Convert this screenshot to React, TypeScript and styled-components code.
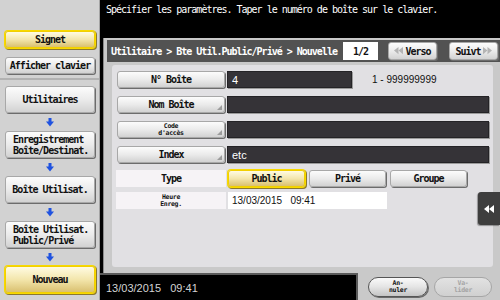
import React from 'react';
import styled, { createGlobalStyle, css } from 'styled-components';

const MONO = `"DejaVu Sans Mono", "Liberation Mono", monospace`;
const SANS = `"Liberation Sans", Arial, sans-serif`;

const GlobalStyle = createGlobalStyle`
  html, body {
    margin: 0;
    padding: 0;
    background: #000;
  }
  body {
    width: 500px;
    height: 300px;
    overflow: hidden;
  }
  * {
    box-sizing: border-box;
  }
`;

const raised = css`
  background: linear-gradient(#fcfcfc, #ebebeb 50%, #d2d2d2);
  border: 1px solid #a8a8a8;
  border-radius: 3px;
  box-shadow: 1px 1px 0 #6c6c6c;
`;

const lit = css`
  background: linear-gradient(#fffbe2, #f3e6ac 50%, #d9c070);
  border: 1px solid #f2cf00;
  border-radius: 3px;
  box-shadow: 0 0 0 1px #f7d900, 1px 1px 0 1px #8a7830;
`;

const Screen = styled.div`
  position: relative;
  display: flex;
  width: 500px;
  height: 300px;
  font-family: ${MONO};
  font-size: 10px;
  letter-spacing: -1px;
  color: #111;
`;

const Sidebar = styled.div`
  width: 100px;
  min-width: 0;
  flex: 0 0 100px;
  overflow: hidden;
  display: flex;
  flex-direction: column;
  background: #d2d2d2;
  border-right: 1px solid #a4a4a4;
`;

const ShortcutBlock = styled.div`
  height: 80px;
  display: flex;
  flex-direction: column;
  gap: 9px;
  padding: 31px 4px 0 5px;
  border-bottom: 2px solid #b2b2b2;
`;

const NavBlock = styled.div`
  display: flex;
  flex-direction: column;
  padding: 6px 4px 0 5px;
`;

const SideButton = styled.div<{ $active?: boolean; $tall?: boolean; $left?: boolean }>`
  ${(p) => (p.$active ? lit : raised)}
  width: 90px;
  height: ${(p) => (p.$tall ? 27 : 17)}px;
  display: flex;
  flex-direction: column;
  justify-content: center;
  align-items: ${(p) => (p.$left ? 'flex-start' : 'center')};
  padding: 0 0 0 ${(p) => (p.$left ? 7 : 0)}px;
  font-weight: bold;
  line-height: 11px;
  white-space: nowrap;
`;

const ArrowSlot = styled.div`
  height: 18px;
  display: flex;
  align-items: center;
  justify-content: center;
`;

const Main = styled.div`
  flex: 1;
  min-width: 0;
  display: flex;
  flex-direction: column;
  background: #000;
`;

const Message = styled.div`
  height: 38px;
  padding: 4px 0 0 6px;
  line-height: 12px;
  color: #fff;
  white-space: nowrap;
`;

const Panel = styled.div`
  flex: 1;
  display: flex;
  flex-direction: column;
  margin-left: 3px;
  padding: 2px 0 6px 3px;
  background: #c9c9c9;
  border-left: 1px solid #8a8a8a;
`;

const Header = styled.div`
  height: 22px;
  display: flex;
  align-items: center;
  padding: 0 2px 0 4px;
  background: #525252;
`;

const Crumbs = styled.div`
  flex: 1;
  color: #fff;
  font-weight: bold;
  white-space: nowrap;
`;

const PageBox = styled.div`
  width: 35px;
  height: 18px;
  display: flex;
  align-items: center;
  justify-content: center;
  background: #fff;
  font-weight: bold;
  margin-right: 10px;
`;

const PagerButton = styled.div<{ $gapAfter?: number }>`
  ${raised}
  width: 49px;
  height: 18px;
  display: flex;
  align-items: center;
  justify-content: center;
  gap: 2px;
  font-weight: bold;
  margin-right: ${(p) => p.$gapAfter ?? 0}px;
`;

const InnerBox = styled.div`
  flex: 1;
  margin: 3px 7px 0 5px;
  padding: 6px 4px 0 4px;
  background: #e1e0e3;
  border-radius: 3px;
  display: flex;
  flex-direction: column;
`;

const FieldGroup = styled.div<{ $gap: number; $top?: number }>`
  display: flex;
  flex-direction: column;
  gap: ${(p) => p.$gap}px;
  margin-top: ${(p) => p.$top ?? 0}px;
`;

const Row = styled.div`
  display: flex;
  align-items: center;
  gap: 2px;
  height: 17px;
`;

const LabelButton = styled.div<{ $keyed?: boolean }>`
  ${raised}
  position: relative;
  width: 108px;
  height: 17px;
  margin-left: 1px;
  display: flex;
  flex-direction: column;
  align-items: center;
  justify-content: center;
  font-weight: bold;
  ${(p) =>
    p.$keyed &&
    css`
      &::after {
        content: '';
        position: absolute;
        right: 2px;
        bottom: 2px;
        border-left: 5px solid transparent;
        border-bottom: 5px solid #9c9c9c;
      }
    `}
`;

const PlainLabel = styled.div`
  width: 110px;
  height: 17px;
  display: flex;
  flex-direction: column;
  align-items: center;
  justify-content: center;
  background: #f6f3f6;
  font-weight: bold;
`;

const TinyText = styled.span`
  display: block;
  font-size: 6.5px;
  line-height: 7px;
  height: 7px;
  letter-spacing: -0.3px;
  font-weight: bold;
`;

const DarkField = styled.div<{ $width?: number }>`
  ${(p) => (p.$width ? `width: ${p.$width}px;` : 'flex: 1;')}
  height: 17px;
  display: flex;
  align-items: center;
  padding-left: 4px;
  background: #353337;
  border: 1px solid #242326;
  box-shadow: 1px 1px 0 #9a9a9a;
  color: #fff;
  font-family: ${SANS};
  font-size: 11px;
  letter-spacing: 0;
`;

const Range = styled.span`
  margin-left: 18px;
  font-family: ${SANS};
  font-size: 10px;
  letter-spacing: 0;
`;

const Choices = styled.div`
  display: flex;
  gap: 4px;
`;

const Choice = styled.div<{ $on?: boolean }>`
  ${(p) => (p.$on ? lit : raised)}
  width: 77px;
  height: 17px;
  display: flex;
  align-items: center;
  justify-content: center;
  font-weight: bold;
`;

const WhiteField = styled.div`
  width: 159px;
  height: 17px;
  display: flex;
  align-items: center;
  padding-left: 4px;
  background: #fff;
  font-family: ${SANS};
  font-size: 10px;
  letter-spacing: 0;
  white-space: pre;
`;

const Footer = styled.div`
  height: 27px;
  display: flex;
`;

const DateBar = styled.div`
  width: 258px;
  display: flex;
  align-items: center;
  padding: 0 0 0 6px;
  background: #000;
  border-top: 2px solid #5a5a5a;
  border-right: 2px solid #5a5a5a;
  color: #d4d4d4;
  font-family: ${SANS};
  font-size: 11px;
  letter-spacing: 0;
  white-space: pre;
`;

const ActionBar = styled.div`
  flex: 1;
  display: flex;
  align-items: center;
  gap: 6px;
  padding: 0 8px 0 10px;
  background: #c9c9c9;
`;

const PillButton = styled.div<{ $disabled?: boolean; $width: number }>`
  width: ${(p) => p.$width}px;
  height: 20px;
  display: flex;
  flex-direction: column;
  align-items: center;
  justify-content: center;
  border-radius: 10px;
  ${(p) =>
    p.$disabled
      ? css`
          background: linear-gradient(#e2e2e2, #d0d0d0);
          border: 1px solid #a6a6a6;
          color: #a4a4a4;
        `
      : css`
          background: linear-gradient(#fafafa, #e4e4e4 50%, #c4c4c4);
          border: 1px solid #555;
          box-shadow: 1px 1px 0 #6a6a6a;
          color: #111;
        `}
`;

const SideTab = styled.div`
  position: absolute;
  right: 0;
  top: 192px;
  width: 22px;
  height: 33px;
  display: flex;
  align-items: center;
  justify-content: center;
  background: #3e3e3e;
  border-radius: 3px 0 0 3px;
  box-shadow: -1px 1px 1px rgba(0, 0, 0, 0.35);
`;

const DownArrow: React.FC = () => (
  <svg width="8" height="9" viewBox="0 0 8 9">
    <rect x="2.5" y="0" width="3" height="4" fill="#1f52e0" />
    <polygon points="0,3.5 8,3.5 4,8.5" fill="#1f52e0" />
  </svg>
);

const DoubleTriangle: React.FC<{ dir: 'left' | 'right'; color: string; size?: number }> = ({
  dir,
  color,
  size = 9,
}) => (
  <svg
    width={size}
    height={size * 0.8}
    viewBox="0 0 10 8"
    style={dir === 'right' ? { transform: 'scaleX(-1)' } : undefined}
  >
    <polygon points="0,4 5,0 5,8" fill={color} />
    <polygon points="5,4 10,0 10,8" fill={color} />
  </svg>
);

const navItems: { label: string[]; active?: boolean }[] = [
  { label: ['Utilitaires'] },
  { label: ['Enregistrement', 'Boîte/Destinat.'] },
  { label: ['Boîte Utilisat.'] },
  { label: ['Boîte Utilisat.', 'Public/Privé'] },
  { label: ['Nouveau'], active: true },
];

export default function App() {
  return (
    <>
      <GlobalStyle />
      <Screen>
        <Sidebar>
          <ShortcutBlock>
            <SideButton $active>Signet</SideButton>
            <SideButton>Afficher clavier</SideButton>
          </ShortcutBlock>
          <NavBlock>
            {navItems.map((item, i) => (
              <React.Fragment key={i}>
                {i > 0 && (
                  <ArrowSlot>
                    <DownArrow />
                  </ArrowSlot>
                )}
                <SideButton $tall $active={item.active} $left={item.label.length > 1}>
                  {item.label.map((line) => (
                    <span key={line}>{line}</span>
                  ))}
                </SideButton>
              </React.Fragment>
            ))}
          </NavBlock>
        </Sidebar>

        <Main>
          <Message>Spécifier les paramètres. Taper le numéro de boîte sur le clavier.</Message>
          <Panel>
            <Header>
              <Crumbs>Utilitaire &gt; Bte Util.Public/Privé &gt; Nouvelle</Crumbs>
              <PageBox>1/2</PageBox>
              <PagerButton $gapAfter={12}>
                <DoubleTriangle dir="left" color="#b4b4b4" />
                Verso
              </PagerButton>
              <PagerButton>
                Suivt
                <DoubleTriangle dir="right" color="#b4b4b4" />
              </PagerButton>
            </Header>
            <InnerBox>
              <FieldGroup $gap={8}>
                <Row>
                  <LabelButton>N° Boîte</LabelButton>
                  <DarkField $width={125}>4</DarkField>
                  <Range>1 - 999999999</Range>
                </Row>
                <Row>
                  <LabelButton $keyed>Nom Boîte</LabelButton>
                  <DarkField />
                </Row>
                <Row>
                  <LabelButton $keyed>
                    <TinyText>Code</TinyText>
                    <TinyText>d'accès</TinyText>
                  </LabelButton>
                  <DarkField />
                </Row>
                <Row>
                  <LabelButton $keyed>Index</LabelButton>
                  <DarkField>etc</DarkField>
                </Row>
              </FieldGroup>
              <FieldGroup $gap={5} $top={7}>
                <Row>
                  <PlainLabel>Type</PlainLabel>
                  <Choices>
                    <Choice $on>Public</Choice>
                    <Choice>Privé</Choice>
                    <Choice>Groupe</Choice>
                  </Choices>
                </Row>
                <Row>
                  <PlainLabel>
                    <TinyText>Heure</TinyText>
                    <TinyText>Enreg.</TinyText>
                  </PlainLabel>
                  <WhiteField>{'13/03/2015   09:41'}</WhiteField>
                </Row>
              </FieldGroup>
            </InnerBox>
          </Panel>
          <Footer>
            <DateBar>{'13/03/2015   09:41'}</DateBar>
            <ActionBar>
              <PillButton $width={60}>
                <TinyText>An-</TinyText>
                <TinyText>nuler</TinyText>
              </PillButton>
              <PillButton $width={58} $disabled>
                <TinyText>Va-</TinyText>
                <TinyText>lider</TinyText>
              </PillButton>
            </ActionBar>
          </Footer>
        </Main>

        <SideTab>
          <DoubleTriangle dir="left" color="#fff" size={10} />
        </SideTab>
      </Screen>
    </>
  );
}
